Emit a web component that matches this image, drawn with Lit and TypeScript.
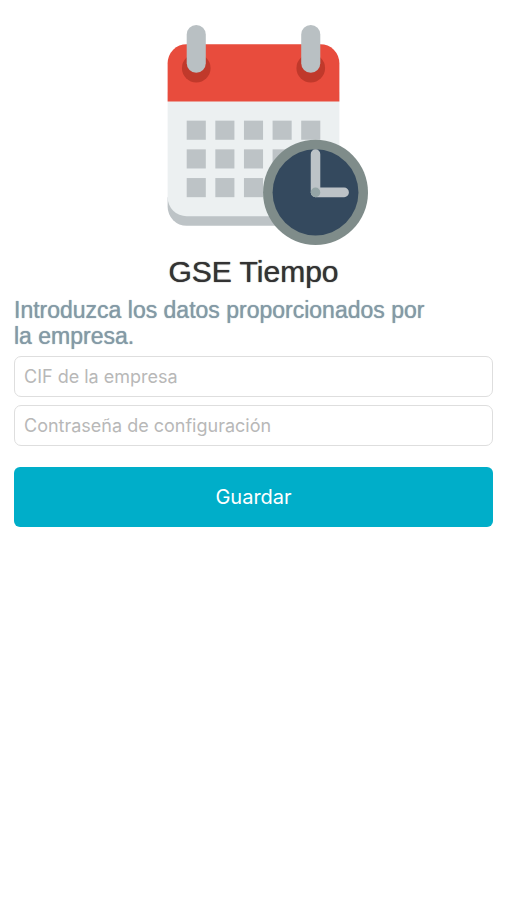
import { LitElement, html, css, svg } from "lit";
import { customElement } from "lit/decorators.js";

const DAY_CELLS = [10, 13, 16].flatMap((y) => [2, 5, 8, 11, 14].map((x) => ({ x, y })));
const RINGS = [3, 15];

@customElement("calendar-clock")
class CalendarClock extends LitElement {
  static styles = css`
    :host {
      display: block;
    }
    .art {
      display: block;
      width: 229px;
      height: 220px;
    }
  `;

  render() {
    return html`
      <svg class="art" viewBox="-3 0 24 23" preserveAspectRatio="none" aria-hidden="true">
        <path fill="#bdc3c6" d="M0 18H18V19A2 2 0 0 1 16 21H2A2 2 0 0 1 0 19Z" />
        <path fill="#ecf0f1" d="M0 7H18V18A2 2 0 0 1 16 20H2A2 2 0 0 1 0 18Z" />
        <path fill="#e84c3d" d="M0 8V4A2 2 0 0 1 2 2H16A2 2 0 0 1 18 4V8Z" />
        ${RINGS.map(
          (x) => svg`
            <circle cx=${x} cy="4.5" r="1.5" fill="#c0392b" />
            <rect x=${x - 1} y="0" width="2" height="5" rx="1" fill="#b9c0c3" />
          `
        )}
        ${DAY_CELLS.map(
          (c) => svg`<rect x=${c.x} y=${c.y} width="2" height="2" fill="#bdc3c6" />`
        )}
        <circle cx="15.5" cy="17.5" r="5.5" fill="#7f8c8a" />
        <circle cx="15.5" cy="17.5" r="4.5" fill="#34495e" />
        <path d="M15.5 13.5V17.5H18.5" fill="none" stroke="#bdc3c7" stroke-linecap="round" stroke-linejoin="round" />
        <circle cx="15.5" cy="17.5" r="0.5" fill="#95a5a6" />
      </svg>
    `;
  }
}

@customElement("app-root")
class AppRoot extends LitElement {
  static styles = css`
    :host {
      display: block;
      min-height: 100vh;
      background: #fff;
    }
    .page {
      display: flex;
      flex-direction: column;
      padding: 25px 14px;
    }
    .logo {
      align-self: center;
    }
    .title {
      margin: 8px 0 0;
      font: 400 30px/38px "Liberation Sans", Arial, sans-serif;
      color: #333;
      text-align: center;
      text-shadow: 0 0 1px #333;
    }
    .intro {
      margin: 6px 0 0;
      padding-right: 56px;
      font: 400 23px/26px "Liberation Sans", Arial, sans-serif;
      color: #849aa6;
      text-shadow: 0 0 1px #849aa6;
    }
    .form {
      display: flex;
      flex-direction: column;
      gap: 8px;
      margin-top: 7px;
    }
    .field {
      box-sizing: border-box;
      width: 100%;
      height: 41px;
      margin: 0;
      padding: 0 9px;
      border: 1px solid #dedede;
      border-radius: 7px;
      background: #fff;
      font: 400 18px/24px Inter, "Liberation Sans", sans-serif;
      color: #333;
    }
    .field::placeholder {
      color: #b8b8b8;
      opacity: 1;
    }
    .save {
      height: 60px;
      margin-top: 13px;
      padding: 0;
      border: 0;
      border-radius: 6px;
      background: #00aec9;
      font: 400 20px/24px Inter, "Liberation Sans", sans-serif;
      color: #fff;
    }
  `;

  render() {
    return html`
      <main class="page">
        <calendar-clock class="logo"></calendar-clock>
        <h1 class="title">GSE Tiempo</h1>
        <p class="intro">Introduzca los datos proporcionados por la empresa.</p>
        <form class="form" @submit=${(e: Event) => e.preventDefault()}>
          <input class="field" type="text" placeholder="CIF de la empresa" aria-label="CIF de la empresa" />
          <input
            class="field"
            type="password"
            placeholder="Contraseña de configuración"
            aria-label="Contraseña de configuración"
          />
          <button class="save" type="submit">Guardar</button>
        </form>
      </main>
    `;
  }
}
